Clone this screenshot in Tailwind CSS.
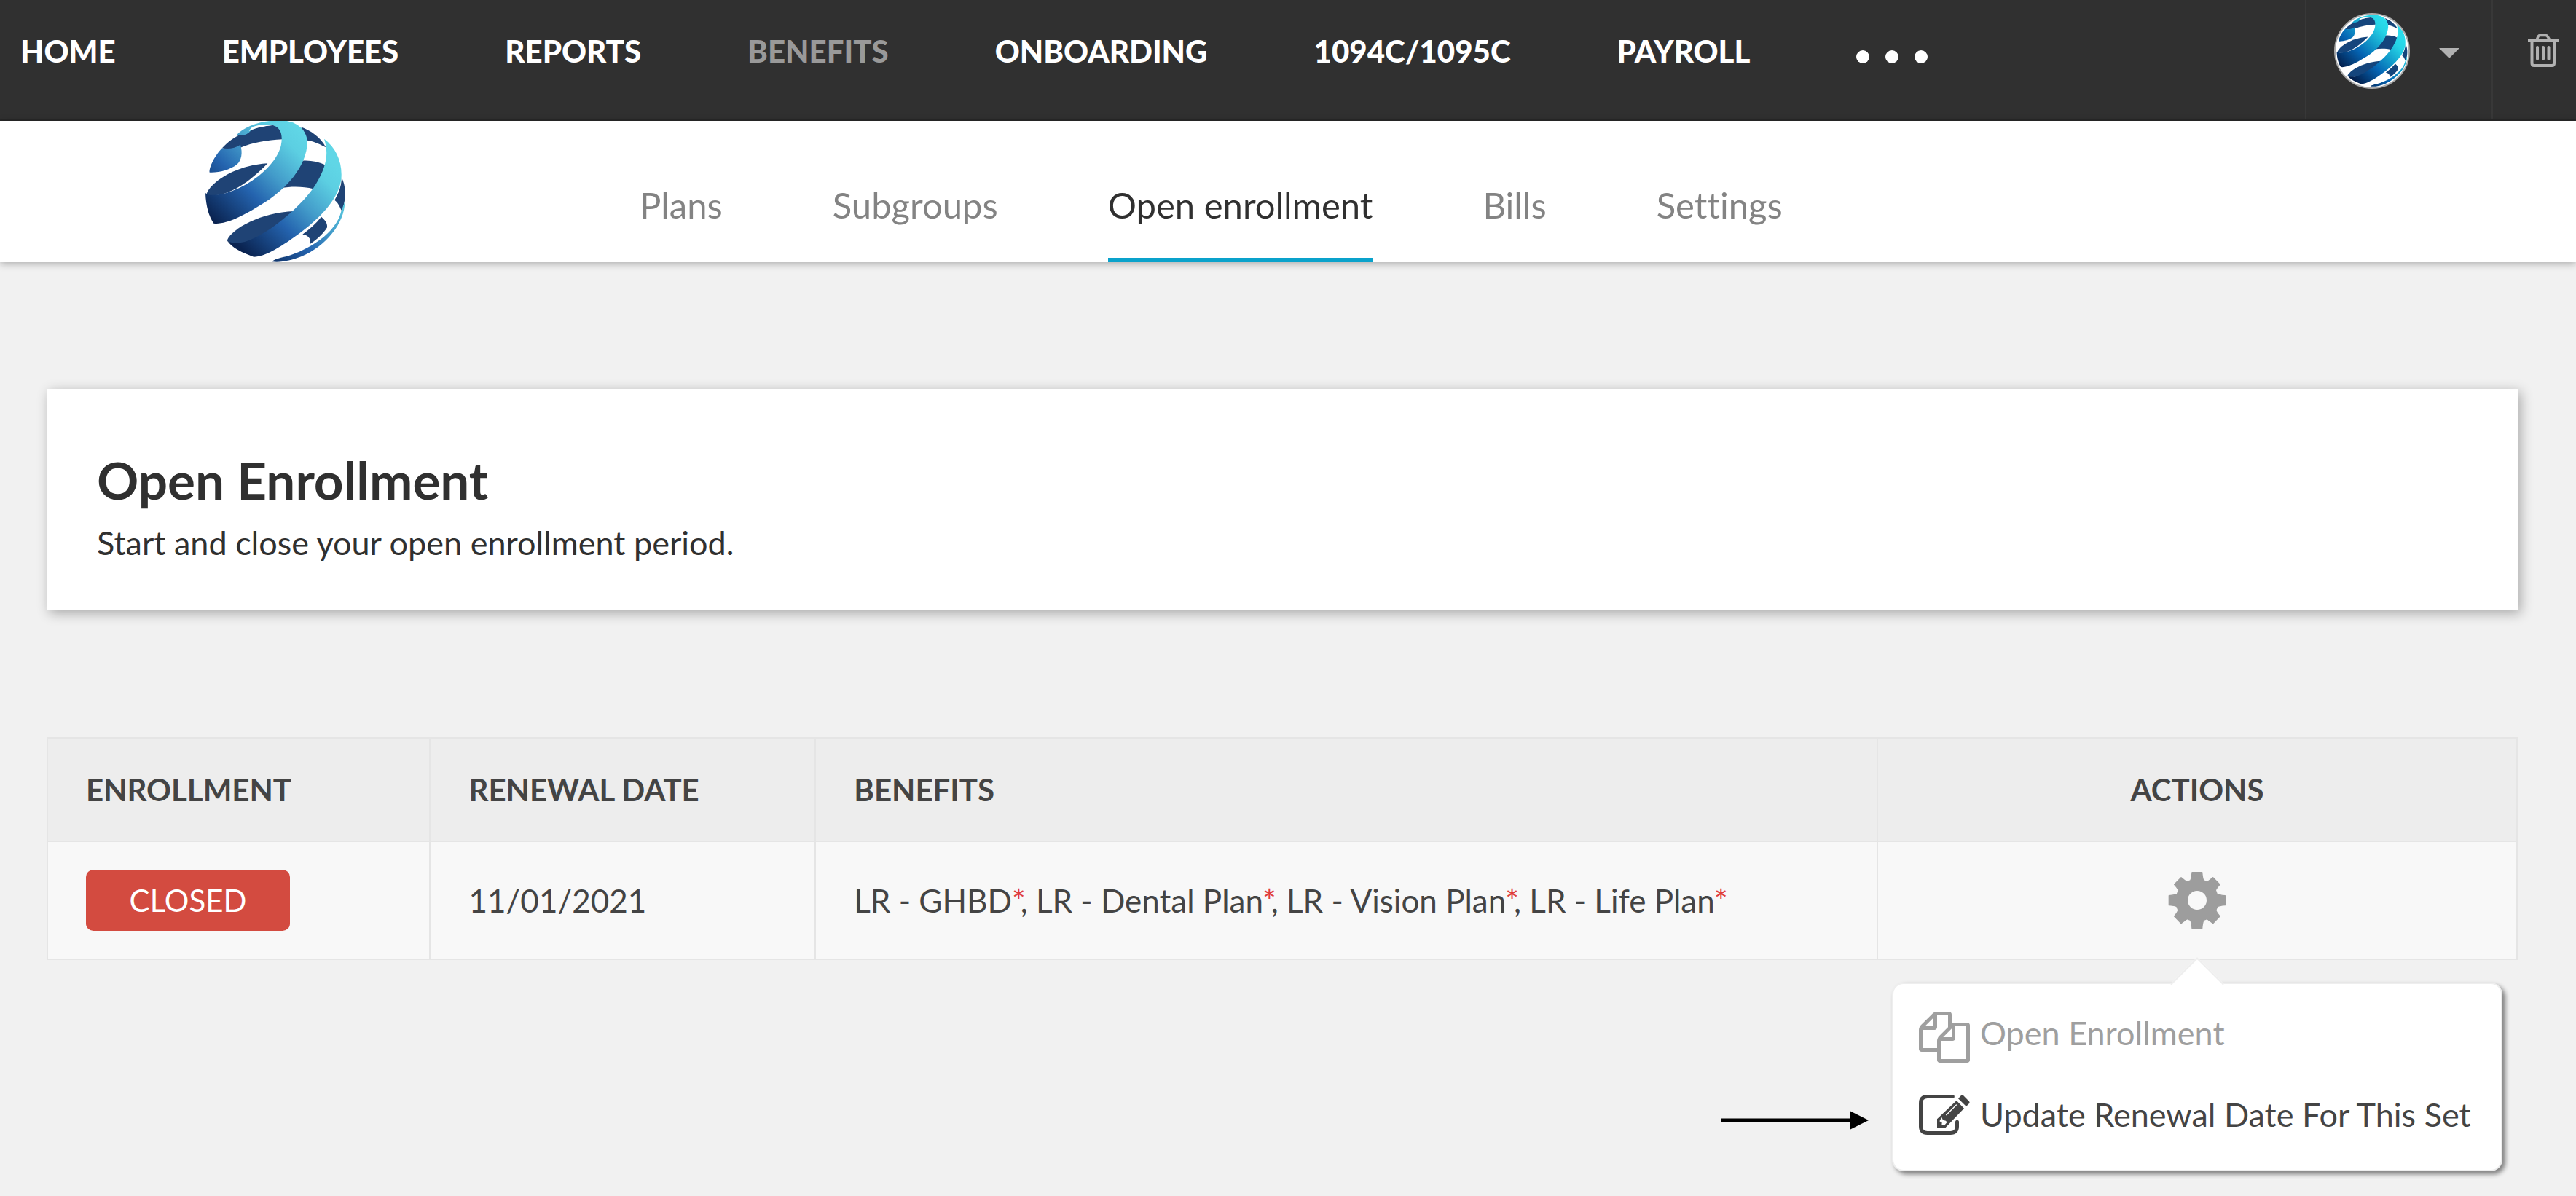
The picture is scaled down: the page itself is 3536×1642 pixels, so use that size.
<!DOCTYPE html>
<html lang="en">
<head>
<meta charset="utf-8">
<meta name="viewport" content="width=device-width, initial-scale=1">
<title>Open Enrollment</title>
<script src="https://cdn.jsdelivr.net/npm/@tailwindcss/browser@4"></script>
</head>
<body class="min-h-screen bg-[#f1f1f1] font-[Lato,sans-serif] text-[#444] [font-variant-ligatures:no-common-ligatures]">

<!-- Shared globe logo; colours come from the --ribbon and --inner properties -->
<svg class="absolute size-0" aria-hidden="true">
  <defs>
    <linearGradient id="ribbon-soft" gradientUnits="userSpaceOnUse" x1="600" y1="230" x2="235" y2="595">
      <stop offset="0" stop-color="#60d6e6"/><stop offset=".14" stop-color="#5ccfe2"/><stop offset=".4" stop-color="#439cca"/><stop offset=".63" stop-color="#2463ae"/><stop offset="1" stop-color="#0a2350"/>
    </linearGradient>
    <linearGradient id="ribbon-vivid" gradientUnits="userSpaceOnUse" x1="600" y1="230" x2="235" y2="595">
      <stop offset="0" stop-color="#2adcec"/><stop offset=".14" stop-color="#25d3e6"/><stop offset=".4" stop-color="#129aca"/><stop offset=".63" stop-color="#0565b4"/><stop offset="1" stop-color="#03204e"/>
    </linearGradient>
    <symbol id="globe" viewBox="66 48 576 582">
      <g class="fill-[var(--inner)]">
        <path d="M135 160C180 110 260 70 345 66L383 75L383 124C320 127 260 137 210 158C180 166 150 166 135 160Z"/>
        <path d="M458 72C500 88 540 115 562 157C530 140 505 130 483 128C480 108 472 90 458 72Z"/>
        <path d="M466 212C500 210 530 216 562 230C550 270 530 300 510 328C470 317 420 317 378 324C418 290 448 255 466 212Z"/>
        <path d="M70 350C85 305 180 232 322 223C262 285 200 332 130 352C100 357 78 357 70 350Z"/>
        <path d="M155 540C175 490 300 424 430 420C372 470 292 537 222 550C190 555 162 552 155 540Z"/>
        <path d="M627 282C646 320 646 370 628 418C622 412 617 388 598 374C615 345 625 320 627 282Z"/>
        <path d="M543 443C560 458 569 470 567 487C550 515 520 540 498 554C500 530 490 520 466 515C497 492 522 470 543 443Z"/>
      </g>
      <g class="fill-[var(--ribbon)]">
        <path d="M193 107C230 68 300 44 380 46C450 48 492 95 485 150C475 240 400 330 300 390C220 440 150 476 100 470C80 440 68 400 66 345C75 356 100 355 130 350C230 330 355 240 377 150C386 105 376 76 345 66C300 60 265 76 245 96C230 108 210 110 193 107Z"/>
        <path d="M135 160C160 166 190 160 210 146C220 180 215 210 195 228C165 250 120 262 83 260C80 245 100 195 135 160Z"/>
        <path d="M555 122C605 160 632 220 625 290C610 390 500 480 420 535C370 570 310 608 265 608C220 592 175 572 155 540C165 552 200 553 230 545C330 515 470 390 520 310C568 230 573 180 555 122Z"/>
        <path d="M640 380C640 470 560 565 460 607C420 622 380 632 342 628C345 620 360 615 400 606C490 580 605 510 625 420Z"/>
      </g>
      <path class="fill-white" d="M262 72C290 62 318 60 338 66C305 70 275 76 245 90C250 82 255 76 262 72Z"/>
    </symbol>
  </defs>
</svg>

<header class="flex h-[166px] items-stretch border-b-2 border-[#282828] bg-[#303030] text-[42px] leading-[52px] text-white">
  <nav aria-label="Main" class="flex flex-1 items-start gap-[146px] pt-11 pl-7 font-black whitespace-nowrap">
    <a href="#">HOME</a>
    <a href="#">EMPLOYEES</a>
    <a href="#">REPORTS</a>
    <a href="#" aria-current="page" class="text-[#999]">BENEFITS</a>
    <a href="#">ONBOARDING</a>
    <a href="#">1094C/1095C</a>
    <a href="#">PAYROLL</a>
    <button type="button" aria-label="More" class="flex h-[68px] items-center gap-[22px]">
      <span class="size-[18px] rounded-full bg-white"></span>
      <span class="size-[18px] rounded-full bg-white"></span>
      <span class="size-[18px] rounded-full bg-white"></span>
    </button>
  </nav>
  <button type="button" aria-label="Account" class="flex w-[256px] items-start gap-10 border-l-2 border-[#383838] pt-[18px] pl-[38px]">
    <span class="flex size-[104px] items-center justify-center overflow-hidden rounded-full border-2 border-[#aaa] bg-white">
      <svg class="size-[98px] [--inner:#15457c] [--ribbon:url(#ribbon-vivid)]" aria-hidden="true"><use href="#globe"/></svg>
    </span>
    <svg class="mt-12 h-[14px] w-[28px] fill-[#b1b1b1]" viewBox="0 0 28 14" aria-hidden="true"><path d="M0 0H28L14 14Z"/></svg>
  </button>
  <button type="button" aria-label="Trash" class="flex w-[116px] items-start border-l-2 border-[#383838] pt-[46px] pl-12">
    <svg class="h-[46px] w-[42px] fill-none stroke-[#b1b1b1]" viewBox="0 0 42 46" aria-hidden="true">
      <path d="M0 10H42" stroke-width="4"/>
      <path d="M12 9L14 4Q15 2.500 17 2.500H24Q26 2.500 27 4L30 9" stroke-width="3.500"/>
      <path d="M5.500 10V41Q5.500 44 8.500 44H33Q36 44 36 41V10" stroke-width="4"/>
      <path d="M13 19V35M21 19V35M28.500 19V35" stroke-width="4" stroke-linecap="round"/>
    </svg>
  </button>
</header>

<div class="relative flex h-[194px] bg-white pl-[282px] shadow-[0_2px_10px_rgba(0,0,0,0.3)]">
  <a href="#" aria-label="Company home" class="block w-[192px]">
    <svg class="h-full w-full [--inner:#1f4375] [--ribbon:url(#ribbon-soft)]" preserveAspectRatio="none" aria-hidden="true"><use href="#globe"/></svg>
  </a>
  <nav aria-label="Benefits" class="ml-[404px] flex gap-[151px] text-[49px] leading-[60px] whitespace-nowrap text-[#838383]">
    <a href="#" class="pt-[85px]">Plans</a>
    <a href="#" class="pt-[85px]">Subgroups</a>
    <a href="#" aria-current="page" class="border-b-6 border-[#0aa2cb] pt-[85px] text-[#303030]">Open enrollment</a>
    <a href="#" class="pt-[85px]">Bills</a>
    <a href="#" class="pt-[85px]">Settings</a>
  </nav>
</div>

<main class="flex flex-col gap-[174px] pt-[174px] pr-20 pl-16">
  <section class="bg-white px-[69px] pt-[82px] pb-[66px] text-[#303030] shadow-[4px_4px_16px_rgba(0,0,0,0.3)]">
    <h1 class="text-[71px] leading-[86px] font-bold">Open Enrollment</h1>
    <p class="mt-4 text-[45px] leading-[54px]">Start and close your open enrollment period.</p>
  </section>

  <table class="w-full table-fixed border-separate border-spacing-0 border-t-2 border-l-2 border-[#e5e5e5] text-left">
    <thead class="bg-[#ededed] text-[42px] leading-[52px]">
      <tr class="h-[142px]">
        <th scope="col" class="w-[15.5%] border-r-2 border-b-2 border-[#e5e5e5] px-[52px] font-bold">ENROLLMENT</th>
        <th scope="col" class="w-[15.6%] border-r-2 border-b-2 border-[#e5e5e5] px-[52px] font-bold">RENEWAL DATE</th>
        <th scope="col" class="w-[43%] border-r-2 border-b-2 border-[#e5e5e5] px-[52px] font-bold">BENEFITS</th>
        <th scope="col" class="border-r-2 border-b-2 border-[#e5e5e5] px-[52px] text-center font-bold">ACTIONS</th>
      </tr>
    </thead>
    <tbody class="bg-[#f8f8f8] text-[44px] leading-[54px]">
      <tr class="h-[162px]">
        <td class="border-r-2 border-b-2 border-[#e5e5e5] px-[52px]">
          <span class="flex h-[84px] w-[280px] items-center justify-center rounded-[10px] bg-[#d34b40] text-[42px] text-white">CLOSED</span>
        </td>
        <td class="border-r-2 border-b-2 border-[#e5e5e5] px-[52px]">11/01/2021</td>
        <td class="border-r-2 border-b-2 border-[#e5e5e5] px-[52px]">LR - GHBD<span class="-mr-[7px] text-[#e03c3c]">*</span>, LR - Dental Plan<span class="-mr-[7px] text-[#e03c3c]">*</span>, LR - Vision Plan<span class="-mr-[7px] text-[#e03c3c]">*</span>, LR - Life Plan<span class="-mr-[7px] text-[#e03c3c]">*</span></td>
        <td class="border-r-2 border-b-2 border-[#e5e5e5] px-[52px]">
          <div class="relative mx-auto w-[80px]">
            <button type="button" aria-label="Actions" aria-expanded="true" class="block">
              <svg class="size-[80px]" viewBox="47 52 240 240" aria-hidden="true">
                <path class="fill-[#9d9d9d] stroke-[#9d9d9d]" stroke-width="4" stroke-linejoin="round" fill-rule="evenodd" d="M146 57H187Q189 84 194 91L208 96Q216 91 232 78L260 107Q246 123 243 131L249 147Q257 151 282 153V192Q257 194 250 198L244 213Q246 220 260 238L232 267Q214 253 207 249L194 254Q189 262 187 288H146Q144 262 139 254L126 249Q119 253 101 267L73 238Q87 220 89 213L83 198Q76 194 51 192V153Q76 151 84 147L90 131Q87 123 73 107L101 78Q117 91 125 96L139 91Q144 84 146 57ZM167 131A41 41 0 1 0 167 213A41 41 0 1 0 167 131Z"/>
              </svg>
            </button>

            <div class="absolute top-full left-1/2 z-10 mt-[73px] w-[838px] -translate-x-1/2 rounded-[16px] border-2 border-[#eee] bg-white pt-[38px] pb-[37px] text-[45px] leading-[58px] shadow-[4px_4px_6px_rgba(0,0,0,0.48)]">
              <span class="absolute -top-[26px] left-1/2 size-[52px] -translate-x-1/2 rotate-45 border-t-2 border-l-2 border-[#eee] bg-white"></span>
              <ul class="relative flex flex-col gap-[32px] px-[35px]">
                <li>
                  <button type="button" disabled class="flex h-[70px] w-full items-start gap-[14px] text-left whitespace-nowrap text-[#9f9f9f]">
                    <svg class="size-[70px] shrink-0 fill-current" viewBox="0 0 1792 1792" aria-hidden="true"><path d="M1696 384q40 0 68 28t28 68v1216q0 40-28 68t-68 28h-960q-40 0-68-28t-28-68v-288h-544q-40 0-68-28t-28-68v-672q0-40 20-88t48-76l408-408q28-28 76-48t88-20h416q40 0 68 28t28 68v328q68-40 128-40h416zm-544 213l-299 299h299v-299zm-640-384l-299 299h299v-299zm196 647l316-316v-416h-384v416q0 40-28 68t-68 28h-416v640h512v-256q0-40 20-88t48-76zm956 804v-1152h-384v416q0 40-28 68t-68 28h-416v640h896z"/></svg>
                    Open Enrollment
                  </button>
                </li>
                <li>
                  <a href="#" class="flex h-[78px] items-center gap-[14px] whitespace-nowrap">
                    <svg class="h-[55px] w-[70px] shrink-0" viewBox="42 405 210 165" aria-hidden="true">
                      <path class="fill-none stroke-current" stroke-width="15" stroke-linecap="round" d="M181 412.500H77Q49.500 412.500 49.500 440V535Q49.500 562.500 77 562.500H172Q199.500 562.500 199.500 535V517"/>
                      <path class="fill-current" d="M197 429L228 461L152 540H117V505ZM204 421L216 408Q220 403 225 408L248 431Q253 436 249 441L237 453Z"/>
                      <path class="fill-white" d="M127 514L136 498L141 509L153 512L158 518L149 529L136 531L137 520Z"/>
                      <path class="fill-none stroke-white" stroke-width="4" stroke-linecap="round" d="M155 488L196 447"/>
                    </svg>
                    Update Renewal Date For This Set
                  </a>
                </li>
              </ul>
              <svg class="absolute top-[174px] right-full mr-[34px] h-[26px] w-[203px]" viewBox="0 0 203 26" aria-hidden="true"><path d="M0 10.500H178V.500L203 13L178 25.500V15.500H0Z"/></svg>
            </div>
          </div>
        </td>
      </tr>
    </tbody>
  </table>
</main>
</body>
</html>
